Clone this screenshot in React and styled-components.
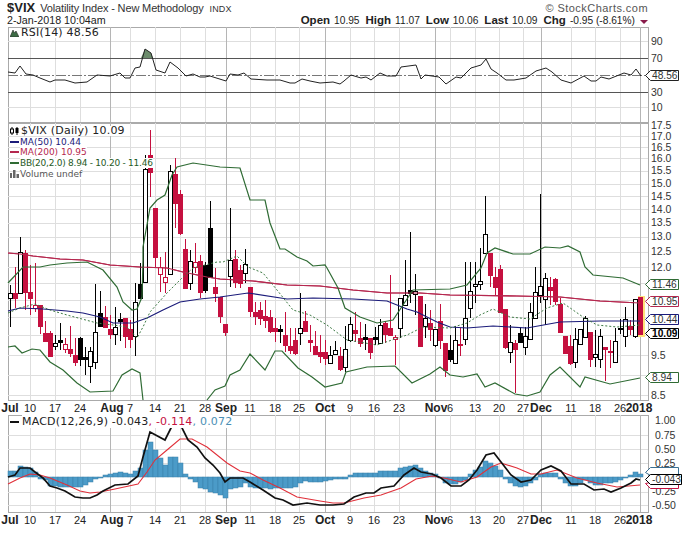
import React from "react";
import styled, { createGlobalStyle } from "styled-components";

const GlobalStyle = createGlobalStyle`
  html, body {
    margin: 0;
    padding: 0;
    background: #fff;
  }
`;

const Page = styled.div`
  width: 688px;
  height: 533px;
  overflow: hidden;
  display: flex;
  flex-direction: column;
  background: #fff;
  font-family: "Liberation Sans", Arial, sans-serif;
  color: #222;
`;

const Header = styled.div`
  height: 27px;
  padding: 1px 40px 0 7px;
  box-sizing: border-box;
`;

const TitleRow = styled.div`
  display: flex;
  align-items: baseline;
  justify-content: space-between;
  height: 13px;
`;

const TitleLeft = styled.div`
  display: flex;
  align-items: baseline;
`;

const Symbol = styled.span`
  font-size: 13px;
  font-weight: 700;
  line-height: 13px;
  color: #222;
  transform-origin: left bottom;
`;

const Name = styled.span`
  margin-left: 5px;
  font-size: 11px;
  letter-spacing: -0.14px;
  color: #333;
`;

const Exchange = styled.span`
  margin-left: 6px;
  font-size: 9px;
  letter-spacing: 0.1px;
  color: #333;
`;

const Logo = styled.span`
  font-size: 11px;
  letter-spacing: 0.45px;
  color: #555;
`;

const InfoRow = styled.div`
  display: flex;
  align-items: baseline;
  justify-content: space-between;
  height: 13px;
  font-size: 10.7px;
`;

const Quote = styled.div`
  display: flex;
  align-items: baseline;
  gap: 6px;
`;

const QuoteItem = styled.span`
  font-size: 10.2px;
  b {
    font-size: 11.5px;
    margin-right: 4px;
  }
`;

const DownArrow = styled.span`
  display: inline-block;
  width: 0;
  height: 0;
  margin-left: -1px;
  border-left: 4px solid transparent;
  border-right: 4px solid transparent;
  border-top: 4px solid #8a1c4c;
`;

const Panel = styled.div`
  position: relative;
  height: ${(p) => p.$height}px;
`;

const Plot = styled.svg`
  display: block;
  width: 688px;
  height: ${(p) => p.$height}px;
  overflow: visible;
`;

const Legend = styled.div`
  position: absolute;
  top: ${(p) => p.$top}px;
  left: 10px;
  display: flex;
  flex-direction: column;
  font-family: "DejaVu Sans", Verdana, sans-serif;
  font-size: 9px;
`;

const LegendRow = styled.div`
  display: flex;
  align-items: center;
  height: 10.6px;
  gap: ${(p) => p.$gap ?? 1}px;
`;

const LegendText = styled.span`
  background: #fff;
  white-space: nowrap;
  color: ${(p) => p.$color || "#222"};
  font-size: ${(p) => p.$size || 9}px;
  letter-spacing: ${(p) => p.$spacing || 0}px;
  line-height: 10px;
`;

const Swatch = styled.span`
  width: 9px;
  height: 2px;
  background: ${(p) => p.$color};
`;

const AxisText = styled.text`
  font-family: "Liberation Sans", Arial, sans-serif;
  font-size: 10.5px;
  fill: #333;
`;

const DateText = styled.text`
  font-family: "Liberation Sans", Arial, sans-serif;
  font-size: ${(p) => (p.$strong ? 12 : 11)}px;
  font-weight: ${(p) => (p.$strong ? 700 : 400)};
  text-anchor: middle;
  fill: #222;
`;

const TagText = styled.text`
  font-family: "Liberation Sans", Arial, sans-serif;
  font-size: 10.2px;
  font-weight: ${(p) => (p.$strong ? 700 : 400)};
  fill: ${(p) => (p.$strong ? "#000" : "#333")};
`;

const Trace = styled.polyline`
  fill: none;
  stroke: ${(p) => p.$color};
  stroke-width: ${(p) => p.$width || 1.2}px;
  stroke-dasharray: ${(p) => p.$dash || "none"};
`;

const RED = "#c5103f";
const NAVY = "#1b1b7a";
const MAROON = "#b5284f";
const GREEN = "#2f6b34";

// weekly gridlines, x for each date label
const MAJOR_X = [110, 226, 325, 435, 541, 640];
const MINOR_X = [30, 55, 80, 130, 155, 180, 205, 250, 275, 299, 350, 374, 399, 450, 475, 499, 523, 571, 595, 620];
const DATES = [
  ["Jul", 10, true], ["10", 30], ["17", 55], ["24", 80], ["Aug", 112, true], ["7", 130],
  ["14", 155], ["21", 180], ["28", 205], ["Sep", 226, true], ["11", 250], ["18", 275],
  ["25", 299], ["Oct", 325, true], ["9", 350], ["16", 374], ["23", 399], ["Nov", 436, true],
  ["6", 450], ["13", 475], ["20", 499], ["27", 523], ["Dec", 541, true], ["11", 571],
  ["18", 595], ["26", 620], ["2018", 639, true],
];

const RSI_TICKS = [[90, 41], [70, 58], [30, 92], [10, 107]];
const PRICE_TICKS = [
  ["17.5", 125], ["17.0", 136], ["16.5", 147], ["16.0", 158], ["15.5", 170], ["15.0", 183],
  ["14.5", 196], ["14.0", 209], ["13.5", 222], ["13.0", 236], ["12.5", 251], ["12.0", 267],
  ["9.5", 355], ["8.5", 395],
];
const PRICE_GRID = [136, 147, 158, 171, 184, 196, 209, 223, 237, 252, 267, 283, 300, 317, 335, 355, 375, 395];
const MACD_TICKS = [["1.00", 420], ["0.75", 435], ["0.50", 449], ["0.25", 463], ["-0.25", 491], ["-0.50", 505]];

const RSI_LINE = [
  [8, 72], [15, 73], [20, 66], [26, 74], [33, 75], [40, 78], [50, 82], [55, 80], [65, 80], [75, 83],
  [87, 82], [97, 75], [110, 76], [120, 73], [125, 78], [130, 78], [135, 68], [140, 67], [145, 49],
  [151, 53], [156, 70], [165, 73], [170, 62], [178, 68], [186, 76], [193, 74], [200, 77], [205, 77],
  [210, 76], [226, 81], [230, 74], [238, 75], [244, 73], [251, 79], [267, 80], [280, 80], [290, 83],
  [295, 83], [302, 79], [310, 81], [320, 83], [333, 82], [340, 84], [344, 81], [351, 75], [361, 78],
  [366, 77], [371, 80], [380, 73], [387, 76], [396, 76], [401, 67], [416, 65], [421, 79], [425, 75],
  [439, 77], [446, 84], [456, 77], [461, 78], [471, 68], [481, 65], [486, 59], [491, 69], [497, 73],
  [506, 80], [514, 80], [526, 78], [536, 71], [546, 68], [552, 72], [561, 80], [571, 83], [584, 76],
  [591, 81], [596, 81], [601, 77], [609, 79], [624, 73], [631, 75], [636, 69], [641, 76],
];

// [kind, wick top, wick bottom, body top, body bottom], one per trading day, 5px apart
// h = hollow, f = black, r = red, p = hollow red
const CANDLES = [
  ["h", 285, 327, 293, 298], ["r", 267, 308, 293, 298], ["h", 237, 293, 252, 293], ["r", 250, 310, 253, 292],
  ["r", 265, 315, 292, 298], ["p", 263, 312, 305, 308], ["r", 305, 334, 305, 326], ["r", 321, 341, 333, 341],
  ["r", 331, 356, 333, 356], ["h", 335, 350, 343, 346], ["f", 323, 350, 340, 342], ["p", 338, 353, 344, 349],
  ["r", 326, 357, 349, 353], ["r", 338, 366, 355, 362], ["f", 337, 366, 338, 359], ["f", 347, 375, 357, 359],
  ["h", 347, 383, 351, 366], ["h", 284, 369, 332, 362], ["f", 291, 327, 313, 326], ["r", 306, 328, 317, 327],
  ["r", 315, 339, 329, 334], ["h", 307, 345, 327, 334], ["f", 313, 341, 319, 321], ["r", 318, 348, 318, 336],
  ["r", 320, 348, 329, 339], ["h", 283, 356, 302, 336], ["f", 263, 298, 284, 298], ["h", 155, 282, 169, 282],
  ["r", 130, 197, 155, 172], ["r", 208, 267, 208, 257], ["p", 257, 292, 267, 274], ["p", 252, 293, 277, 282],
  ["h", 165, 274, 171, 274], ["r", 158, 228, 174, 203], ["r", 190, 235, 194, 233], ["r", 239, 288, 249, 288],
  ["h", 250, 290, 261, 283], ["p", 243, 273, 262, 267], ["r", 255, 298, 261, 292], ["f", 262, 293, 265, 290],
  ["f", 201, 277, 228, 277], ["r", 268, 302, 287, 293], ["r", 297, 323, 297, 316], ["r", 324, 336, 324, 332],
  ["h", 208, 287, 260, 276], ["r", 250, 288, 259, 282], ["r", 265, 288, 270, 283], ["h", 249, 283, 264, 273],
  ["r", 287, 317, 287, 311], ["r", 302, 325, 312, 316], ["r", 302, 325, 310, 318], ["r", 300, 328, 316, 320],
  ["r", 310, 333, 317, 331], ["r", 318, 342, 328, 331], ["f", 325, 343, 329, 331], ["r", 312, 352, 335, 345],
  ["r", 328, 354, 346, 350], ["r", 328, 355, 340, 353], ["h", 293, 345, 328, 333], ["r", 311, 332, 321, 331],
  ["r", 325, 352, 340, 342], ["r", 331, 355, 346, 354], ["r", 335, 363, 352, 356], ["r", 340, 365, 352, 358],
  ["h", 346, 363, 355, 363], ["h", 341, 354, 350, 354], ["r", 347, 371, 356, 369], ["h", 326, 372, 349, 367],
  ["h", 317, 342, 324, 340], ["r", 312, 342, 330, 333], ["r", 322, 347, 338, 343], ["f", 324, 350, 337, 339],
  ["r", 338, 359, 338, 352], ["f", 327, 345, 337, 339], ["h", 319, 343, 325, 343], ["r", 321, 343, 323, 334],
  ["r", 275, 335, 328, 335], ["p", 335, 365, 337, 339], ["h", 298, 338, 298, 328], ["h", 260, 305, 295, 305],
  ["f", 232, 303, 290, 293], ["h", 274, 315, 291, 294], ["r", 296, 347, 296, 346], ["h", 304, 338, 318, 326],
  ["r", 310, 341, 323, 329], ["h", 329, 347, 329, 345], ["r", 304, 349, 321, 340], ["r", 343, 377, 343, 370],
  ["f", 335, 362, 350, 359], ["h", 326, 364, 340, 363], ["r", 328, 356, 344, 345], ["h", 262, 345, 318, 339],
  ["h", 262, 318, 291, 308], ["h", 262, 303, 284, 286], ["h", 248, 290, 281, 284], ["h", 196, 253, 234, 253],
  ["r", 253, 287, 253, 275], ["r", 267, 295, 277, 287], ["r", 265, 313, 269, 312], ["r", 309, 349, 309, 347],
  ["h", 325, 363, 342, 352], ["r", 340, 393, 343, 349], ["f", 327, 342, 333, 342], ["h", 327, 355, 336, 347],
  ["h", 303, 339, 312, 339], ["h", 267, 318, 292, 318], ["h", 194, 303, 286, 295], ["h", 273, 325, 278, 299],
  ["r", 277, 305, 287, 290], ["r", 278, 305, 279, 301], ["r", 298, 333, 304, 332], ["r", 336, 353, 336, 353],
  ["r", 335, 365, 346, 363], ["h", 328, 368, 339, 362], ["h", 329, 344, 329, 344], ["h", 316, 337, 318, 337],
  ["r", 332, 367, 332, 359], ["h", 330, 367, 354, 357], ["h", 329, 368, 336, 359], ["r", 347, 381, 347, 349],
  ["r", 340, 368, 351, 352], ["h", 328, 362, 341, 362], ["h", 319, 334, 328, 329], ["h", 307, 347, 319, 336],
  ["r", 320, 335, 326, 329], ["h", 299, 338, 299, 336],
];

const MA200 = [
  [8, 253], [20, 254], [33, 256], [60, 259], [83, 260], [110, 265], [140, 267], [167, 268], [183, 272],
  [207, 277], [220, 279], [253, 281], [287, 285], [320, 286], [353, 290], [387, 293], [420, 293], [450, 295],
  [517, 296], [560, 297], [600, 301], [640, 303],
];
const MA50 = [
  [8, 311], [20, 308], [43, 309], [67, 311], [83, 313], [100, 317], [113, 323], [133, 323], [147, 318],
  [163, 310], [180, 302], [200, 299], [220, 297], [248, 293], [287, 299], [313, 298], [353, 299], [387, 301],
  [407, 309], [417, 312], [437, 322], [450, 327], [467, 328], [493, 326], [527, 328], [560, 322], [600, 321],
  [640, 321],
];
const BB_UPPER = [
  [8, 283], [23, 267], [40, 267], [50, 265], [67, 263], [87, 262], [103, 270], [117, 287], [123, 302],
  [132, 310], [137, 309], [142, 297], [143, 260], [143, 247], [150, 208], [157, 200], [165, 195], [172, 175],
  [177, 167], [193, 163], [220, 167], [240, 168], [250, 200], [265, 200], [270, 223], [280, 249], [285, 249],
  [297, 257], [307, 261], [313, 266], [325, 265], [327, 268], [338, 288], [345, 308], [360, 317], [377, 323],
  [393, 320], [403, 305], [413, 290], [450, 289], [467, 285], [481, 268], [487, 253], [495, 248], [513, 254],
  [530, 254], [545, 247], [560, 248], [568, 246], [580, 252], [585, 267], [593, 275], [623, 278], [640, 285],
];
const BB_LOWER_A = [
  [8, 347], [15, 346], [22, 353], [32, 349], [40, 350], [50, 362], [63, 370], [77, 383], [90, 392],
  [113, 391], [122, 375], [132, 369], [140, 373], [143, 400],
];
const BB_LOWER_B = [
  [207, 400], [215, 390], [225, 386], [230, 375], [240, 370], [250, 354], [265, 370], [275, 351], [282, 351],
  [298, 368], [312, 377], [325, 387], [342, 383], [346, 372], [367, 367], [395, 366], [412, 383], [430, 374],
  [440, 367], [450, 375], [463, 377], [477, 374], [485, 387], [495, 383], [515, 394], [527, 396], [540, 392],
  [550, 375], [560, 367], [580, 387], [585, 377], [610, 384], [640, 378],
];
const BB_MID = [
  [8, 313], [20, 308], [35, 304], [50, 310], [67, 315], [97, 323], [113, 325], [127, 327], [137, 338],
  [143, 327], [150, 312], [167, 293], [183, 277], [193, 268], [217, 262], [223, 262], [237, 256], [248, 267],
  [263, 273], [277, 290], [293, 310], [310, 315], [327, 325], [347, 340], [377, 345], [407, 335], [423, 327],
  [450, 328], [467, 323], [480, 315], [493, 309], [510, 317], [530, 319], [547, 308], [563, 303], [583, 317],
  [597, 325], [617, 327], [640, 325],
];

// histogram tops, one per day, zero line at y=477
const MACD_HIST = [
  471, 471, 466, 467, 468, 472, 479, 480, 486, 486, 487, 487, 487, 487, 487, 485, 482, 479, 478, 475,
  474, 473, 472, 473, 474, 471, 468, 450, 442, 450, 458, 465, 457, 457, 463, 474, 479, 482, 488, 489,
  492, 493, 495, 498, 489, 488, 487, 483, 487, 488, 488, 488, 489, 488, 488, 488, 488, 487, 483, 481,
  482, 482, 482, 481, 480, 479, 479, 479, 475, 473, 473, 473, 473, 473, 471, 471, 471, 471, 468, 467,
  466, 465, 468, 471, 473, 474, 477, 483, 484, 484, 482, 480, 474, 470, 467, 461, 463, 466, 470, 479,
  483, 486, 487, 486, 483, 480, 474, 473, 473, 473, 479, 483, 486, 486, 483, 480, 483, 485, 485, 483,
  483, 482, 480, 477, 475, 472, 474,
];
const MACD_LINE = [
  [8, 477], [15, 475], [20, 468], [30, 468], [35, 472], [43, 478], [50, 486], [57, 488], [65, 491], [75, 497],
  [83, 498], [90, 498], [97, 495], [103, 491], [115, 485], [128, 484], [138, 476], [143, 457], [150, 432],
  [165, 440], [171, 428], [175, 420], [181, 420], [182, 428], [188, 440], [197, 447], [205, 458], [213, 465],
  [220, 473], [225, 482], [230, 478], [243, 478], [250, 482], [263, 490], [275, 498], [283, 500], [293, 505],
  [307, 503], [320, 505], [333, 505], [344, 504], [354, 497], [366, 493], [374, 493], [381, 488], [394, 486],
  [404, 475], [414, 468], [421, 472], [432, 474], [441, 478], [451, 486], [461, 486], [469, 480], [477, 470],
  [486, 455], [494, 453], [501, 462], [511, 475], [521, 482], [531, 480], [541, 470], [551, 466], [561, 471],
  [571, 484], [584, 484], [594, 490], [604, 489], [611, 492], [621, 488], [631, 483], [636, 479], [640, 480],
];
const MACD_SIGNAL = [
  [8, 484], [20, 478], [30, 474], [40, 475], [50, 478], [67, 485], [80, 491], [90, 493], [100, 492], [115, 489],
  [138, 484], [147, 472], [155, 460], [167, 450], [180, 439], [192, 439], [207, 447], [227, 463], [240, 471],
  [250, 473], [263, 480], [280, 488], [297, 497], [320, 501], [333, 503], [344, 503], [364, 498], [381, 495],
  [401, 488], [416, 479], [432, 476], [444, 478], [461, 482], [477, 477], [491, 467], [501, 463], [517, 468],
  [531, 474], [541, 474], [557, 470], [577, 478], [597, 483], [617, 487], [640, 485],
];

const toPoints = (list) => list.map(([x, y]) => `${x},${y}`).join(" ");

const GridLines = ({ top, bottom, rows = [] }) => (
  <g>
    <rect x="8.5" y={top + 0.5} width="640" height={bottom - top} fill="#fff" stroke="#aaa" />
    {rows.map((y) => (
      <line key={y} x1="8" x2="648" y1={y + 0.5} y2={y + 0.5} stroke="#dedede" />
    ))}
    {MINOR_X.map((x) => (
      <line key={x} x1={x + 0.5} x2={x + 0.5} y1={top} y2={bottom} stroke="#dedede" />
    ))}
    {MAJOR_X.map((x) => (
      <line key={x} x1={x + 0.5} x2={x + 0.5} y1={top} y2={bottom} stroke="#b5b5b5" />
    ))}
  </g>
);

const ValueTag = ({ y, value, color, strong, right = 678 }) => (
  <g>
    <path
      d={`M645 ${y} L650 ${y - 5} H${right} V${y + 5} H650 Z`}
      fill="#fff"
      stroke={color}
      transform="translate(0.5 0.5)"
    />
    <TagText x="652" y={y + 4} $strong={strong}>{value}</TagText>
  </g>
);

const Candle = ({ index, kind, wickTop, wickBottom, bodyTop, bodyBottom }) => {
  const x = 10 + index * 5;
  const dark = kind === "h" || kind === "f";
  const color = dark ? "#000" : RED;
  const hollow = kind === "h" || kind === "p";
  const height = Math.max(bodyBottom - bodyTop, 1);
  return (
    <g>
      <line x1={x + 0.5} x2={x + 0.5} y1={wickTop} y2={wickBottom} stroke={color} />
      {hollow ? (
        <rect x={x - 1.5} y={bodyTop + 0.5} width="4" height={height} fill="#fff" stroke={color} />
      ) : (
        <rect x={x - 2} y={bodyTop} width="5" height={height + 1} fill={color} />
      )}
    </g>
  );
};

const DateAxis = () => (
  <Plot $height={14} viewBox="0 0 688 14">
    {DATES.map(([label, x, strong]) => (
      <DateText key={label + x} x={x} y="11" $strong={strong}>{label}</DateText>
    ))}
  </Plot>
);

const MountainIcon = () => (
  <svg width="9" height="8" viewBox="0 0 9 8">
    <path d="M0 8 L3 1 L4.5 4 L6 2 L9 8 Z" fill="#3d6b45" stroke="#222" strokeWidth="0.6" />
  </svg>
);

const CandleIcon = () => (
  <svg width="9" height="8" viewBox="0 0 9 8">
    <path d="M2 0 V8 M7 0 V8" stroke="#000" />
    <rect x="0.5" y="2" width="3" height="4" fill="#fff" stroke="#000" />
    <rect x="5.5" y="1" width="3" height="5" fill="#000" />
  </svg>
);

const VolumeIcon = () => (
  <svg width="9" height="8" viewBox="0 0 9 8">
    <path d="M0 3 H2 V8 H0 Z M3 0 H5.5 V8 H3 Z M6.5 4 H9 V8 H6.5 Z" fill="#666" />
  </svg>
);

const RsiPanel = () => (
  <Panel $height={96}>
    <Plot $height={96} viewBox="0 27 688 96">
      <GridLines top={27} bottom={122} rows={[41, 107]} />
      <line x1="8" x2="648" y1="58.5" y2="58.5" stroke="#555" />
      <line x1="8" x2="648" y1="92.5" y2="92.5" stroke="#555" />
      <line x1="8" x2="648" y1="75.5" y2="75.5" stroke="#777" strokeDasharray="10 2 2 2" />
      <path d="M141 58 L145 49 L151 53 L153 58 Z" fill="#6c8c6c" />
      <Trace points={toPoints(RSI_LINE)} $color="#222" $width={1} />
      {RSI_TICKS.map(([label, y]) => (
        <AxisText key={label} x="651" y={y + 4}>{label}</AxisText>
      ))}
      <ValueTag y={75} value="48.56" color="#222" />
    </Plot>
    <Legend $top={1}>
      <LegendRow $gap={2}>
        <MountainIcon />
        <LegendText $size={11} $spacing={0.2}>RSI(14) 48.56</LegendText>
      </LegendRow>
    </Legend>
  </Panel>
);

const PricePanel = () => (
  <Panel $height={278}>
    <Plot $height={278} viewBox="0 123 688 278">
      <GridLines top={123} bottom={400} rows={PRICE_GRID} />
      <rect x="638" y="296" width="7" height="41" fill="#ffe17a" />
      <Trace points={toPoints(MA200)} $color={MAROON} />
      {CANDLES.map(([kind, wickTop, wickBottom, bodyTop, bodyBottom], i) => (
        <Candle
          key={i}
          index={i}
          kind={kind}
          wickTop={wickTop}
          wickBottom={wickBottom}
          bodyTop={bodyTop}
          bodyBottom={bodyBottom}
        />
      ))}
      <line x1="640.5" x2="640.5" y1="297" y2="335" stroke={RED} strokeWidth="5" />
      <Trace points={toPoints(MA200)} $color={MAROON} />
      <Trace points={toPoints(MA50)} $color={NAVY} />
      <Trace points={toPoints(BB_UPPER)} $color={GREEN} />
      <Trace points={toPoints(BB_LOWER_A)} $color={GREEN} />
      <Trace points={toPoints(BB_LOWER_B)} $color={GREEN} />
      <Trace points={toPoints(BB_MID)} $color="#3d7a44" $width={1} $dash="2 2" />
      {PRICE_TICKS.map(([label, y]) => (
        <AxisText key={label} x="651" y={y + 4}>{label}</AxisText>
      ))}
      <ValueTag y={284} value="11.46" color={GREEN} />
      <ValueTag y={301} value="10.95" color={MAROON} />
      <ValueTag y={319} value="10.44" color={NAVY} />
      <ValueTag y={333} value="10.09" color="#000" strong />
      <ValueTag y={377} value="8.94" color={GREEN} />
    </Plot>
    <Legend $top={3}>
      <LegendRow $gap={2}>
        <CandleIcon />
        <LegendText $size={11} $spacing={0.2}>$VIX (Daily) 10.09</LegendText>
      </LegendRow>
      <LegendRow>
        <Swatch $color={NAVY} />
        <LegendText $color={NAVY}>MA(50) 10.44</LegendText>
      </LegendRow>
      <LegendRow>
        <Swatch $color={MAROON} />
        <LegendText $color={MAROON}>MA(200) 10.95</LegendText>
      </LegendRow>
      <LegendRow>
        <Swatch $color={GREEN} />
        <LegendText $color="#1f5a24" $spacing={-0.25}>BB(20,2.0) 8.94 - 10.20 - 11.46</LegendText>
      </LegendRow>
      <LegendRow>
        <VolumeIcon />
        <LegendText $color="#555">Volume undef</LegendText>
      </LegendRow>
    </Legend>
  </Panel>
);

const MacdPanel = () => (
  <Panel $height={98}>
    <Plot $height={98} viewBox="0 415 688 98">
      <GridLines top={415} bottom={512} rows={[435, 449, 463, 492, 505]} />
      {MACD_HIST.map((y, i) => (
        <rect
          key={i}
          x={8 + i * 5}
          y={Math.min(y, 477)}
          width="5"
          height={Math.max(Math.abs(y - 477), 1)}
          fill="#4b9bc8"
          stroke="#3a7fa8"
          strokeWidth="0.5"
        />
      ))}
      <Trace points={toPoints(MACD_SIGNAL)} $color="#e0303a" $width={1.1} />
      <Trace points={toPoints(MACD_LINE)} $color="#111" $width={1.7} />
      {MACD_TICKS.map(([label, y]) => (
        <AxisText key={label} x={label[0] === "-" ? 652 : 655} y={y + 4}>{label}</AxisText>
      ))}
      <path d="M645 472 L650 467 H678 V475 H650 Z" fill="#fff" stroke="#3a6f92" transform="translate(0.5 0.5)" />
      <path d="M645 483 L650 488 H678 V482 H650 Z" fill="#fff" stroke={RED} transform="translate(0.5 0.5)" />
      <ValueTag y={479} value="-0.043" color="#000" right={681} />
    </Plot>
    <Legend $top={2}>
      <LegendRow $gap={3}>
        <Swatch $color="#111" />
        <span>
          <LegendText $size={11} $spacing={0.2}>MACD(12,26,9) -0.043</LegendText>
          <LegendText $size={11} $spacing={0.2} $color={RED}>, -0.114</LegendText>
          <LegendText $size={11} $spacing={0.2} $color="#4b8fb5">, 0.072</LegendText>
        </span>
      </LegendRow>
    </Legend>
  </Panel>
);

const App = () => (
  <Page>
    <GlobalStyle />
    <Header>
      <TitleRow>
        <TitleLeft>
          <Symbol>$VIX</Symbol>
          <Name>Volatility Index - New Methodology</Name>
          <Exchange>INDX</Exchange>
        </TitleLeft>
        <Logo>© StockCharts.com</Logo>
      </TitleRow>
      <InfoRow>
        <span>2-Jan-2018 10:04am</span>
        <Quote>
          <QuoteItem><b>Open</b>10.95</QuoteItem>
          <QuoteItem><b>High</b>11.07</QuoteItem>
          <QuoteItem><b>Low</b>10.06</QuoteItem>
          <QuoteItem><b>Last</b>10.09</QuoteItem>
          <QuoteItem><b>Chg</b>-0.95 (-8.61%)</QuoteItem>
          <DownArrow />
        </Quote>
      </InfoRow>
    </Header>
    <RsiPanel />
    <PricePanel />
    <DateAxis />
    <MacdPanel />
    <DateAxis />
  </Page>
);

export default App;
